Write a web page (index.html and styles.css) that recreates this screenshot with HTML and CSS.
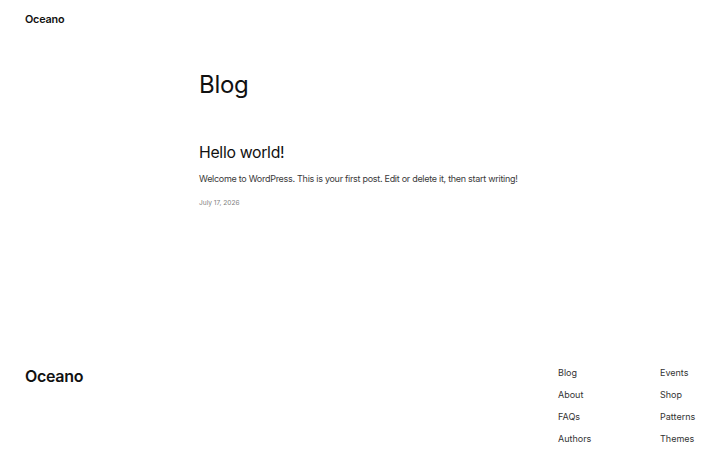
FILE: index.html
```html
<!DOCTYPE html>
<html lang="en">
<head>
<meta charset="utf-8">
<title>Blog – Oceano</title>
<link rel="stylesheet" href="styles.css">
</head>
<body>
<header class="site-header">
  <a class="site-title" href="#">Oceano</a>
</header>
<main class="main">
  <h1 class="page-title">Blog</h1>
  <article class="post">
    <h2 class="post-title">Hello world!</h2>
    <p class="post-excerpt">Welcome to WordPress. This is your first post. Edit or delete it, then start writing!</p>
    <div class="post-date">July 17, 2026</div>
  </article>
</main>
<footer class="site-footer">
  <a class="footer-title" href="#">Oceano</a>
  <nav class="footer-nav">
    <ul class="nav-col">
      <li><a href="#">Blog</a></li>
      <li><a href="#">About</a></li>
      <li><a href="#">FAQs</a></li>
      <li><a href="#">Authors</a></li>
    </ul>
    <ul class="nav-col">
      <li><a href="#">Events</a></li>
      <li><a href="#">Shop</a></li>
      <li><a href="#">Patterns</a></li>
      <li><a href="#">Themes</a></li>
    </ul>
  </nav>
</footer>
</body>
</html>
```
FILE: styles.css
```css
* { box-sizing: border-box; }
html, body { margin: 0; padding: 0; }
body {
  width: 720px;
  height: 450px;
  background: #ffffff;
  color: #111111;
  font-family: Inter, "Noto Sans", "Liberation Sans", sans-serif;
  overflow: hidden;
}
a { color: inherit; text-decoration: none; }
.site-header {
  padding: 7px 25px 0;
  height: 30px;
}
.site-title {
  font-size: 10.8px;
  font-weight: 600;
  letter-spacing: -0.2px;
  line-height: 16px;
}
.main {
  width: 322px;
  margin: 0 auto;
  padding-top: 38px;
  height: 330px;
}
.page-title {
  margin: 0;
  font-size: 24px;
  font-weight: 400;
  letter-spacing: -0.3px;
  line-height: 34px;
}
.post { margin-top: 40px; }
.post-title {
  margin: 0;
  font-size: 15.8px;
  font-weight: 400;
  letter-spacing: -0.3px;
  line-height: 22px;
}
.post-excerpt {
  margin: 8px 0 0;
  font-size: 9px;
  letter-spacing: -0.28px;
  line-height: 14px;
  color: #3a3a3a;
  white-space: nowrap;
}
.post-date {
  margin-top: 12px;
  font-size: 6.6px;
  line-height: 10px;
  color: #808080;
}
.site-footer {
  display: flex;
  justify-content: space-between;
  align-items: flex-start;
  padding: 0 25px;
}
.footer-title {
  margin-top: 5px;
  font-size: 16px;
  font-weight: 600;
  letter-spacing: -0.3px;
  line-height: 22px;
}
.footer-nav {
  display: grid;
  grid-template-columns: 102px 35px;
  padding-top: 6px;
}
.nav-col {
  list-style: none;
  margin: 0;
  padding: 0;
  display: flex;
  flex-direction: column;
  gap: 8px;
}
.nav-col li {
  font-size: 9px;
  line-height: 14px;
  color: #333333;
  white-space: nowrap;
}
```
